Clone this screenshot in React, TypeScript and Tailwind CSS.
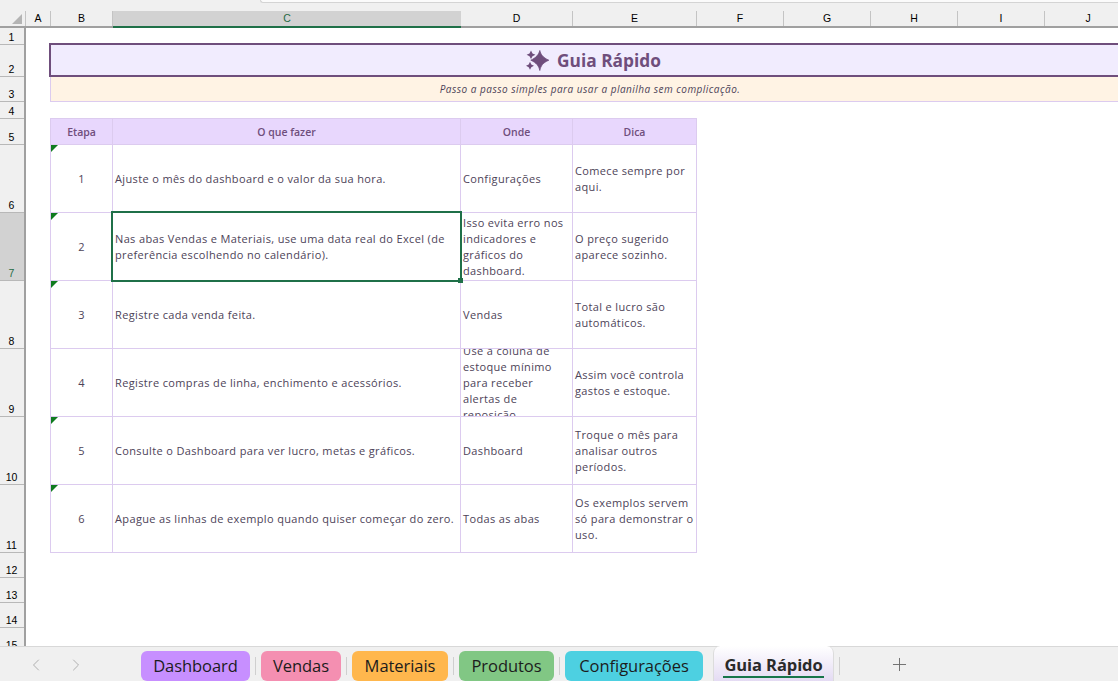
import { Plus, ChevronLeft, ChevronRight } from "lucide-react";

const font = { fontFamily: '"Open Sans", sans-serif' };

const columns: [string, string][] = [
  ["A", "w-[25px]"],
  ["B", "w-[62px]"],
  ["C", "w-[348px]"],
  ["D", "w-[112px]"],
  ["E", "w-[124px]"],
  ["F", "w-[87px]"],
  ["G", "w-[87px]"],
  ["H", "w-[87px]"],
  ["I", "w-[87px]"],
  ["J", "w-[87px]"],
];

const rowHeads: [string, string][] = [
  ["1", "h-[17px]"],
  ["2", "h-[32px]"],
  ["3", "h-[25px]"],
  ["4", "h-[17px]"],
  ["5", "h-[26px]"],
  ["6", "h-[68px]"],
  ["7", "h-[68px]"],
  ["8", "h-[68px]"],
  ["9", "h-[68px]"],
  ["10", "h-[68px]"],
  ["11", "h-[68px]"],
  ["12", "h-[25px]"],
  ["13", "h-[25px]"],
  ["14", "h-[25px]"],
  ["15", "h-[25px]"],
];

const rows = [
  ["1", "Ajuste o mês do dashboard e o valor da sua hora.", "Configurações", "Comece sempre por aqui."],
  ["2", "Nas abas Vendas e Materiais, use uma data real do Excel (de preferência escolhendo no calendário).", "Isso evita erro nos indicadores e gráficos do dashboard.", "O preço sugerido aparece sozinho."],
  ["3", "Registre cada venda feita.", "Vendas", "Total e lucro são automáticos."],
  ["4", "Registre compras de linha, enchimento e acessórios.", "Use a coluna de estoque mínimo para receber alertas de reposição.", "Assim você controla gastos e estoque."],
  ["5", "Consulte o Dashboard para ver lucro, metas e gráficos.", "Dashboard", "Troque o mês para analisar outros períodos."],
  ["6", "Apague as linhas de exemplo quando quiser começar do zero.", "Todas as abas", "Os exemplos servem só para demonstrar o uso."],
];

const tabs: [string, string, string][] = [
  ["Dashboard", "bg-[#c78fff]", "w-[109px]"],
  ["Vendas", "bg-[#f48fb1]", "w-[80px]"],
  ["Materiais", "bg-[#ffb74d]", "w-[96px]"],
  ["Produtos", "bg-[#81c784]", "w-[95px]"],
  ["Configurações", "bg-[#4dd0e1]", "w-[138px]"],
];

const cellText = "h-[68px] flex items-center overflow-hidden px-[2px] text-[11px] leading-4 tracking-[0.36px] text-[#4d4358] border-r border-b border-[#dccbef]";
const headCell = "h-[27px] flex items-center justify-center pt-[2px] text-[10.5px] font-semibold tracking-[0px] text-[#6f4e7c] bg-[#e8d7fd] border-r border-b border-t border-[#dccbef]";

function Sparkle() {
  return (
    <svg viewBox="0 0 23 21" className="w-[23px] h-[21px]" fill="#6f4e7c">
      <path d="M13.8 0.5 C14.8 4.5 16.8 7.5 22.8 10.2 C16.8 12.8 14.8 15.8 13.8 20.5 C12.8 15.8 10.4 12.8 4.8 10.2 C10.4 7.5 12.8 4.5 13.8 0.5 Z" stroke="#6f4e7c" strokeWidth="0.8" />
      <path d="M5 0.5 L6.5 3.4 L9.4 4.8 L6.5 6.2 L5 9.1 L3.5 6.2 L0.6 4.8 L3.5 3.4 Z" />
      <path d="M4 11.8 L5.3 14.4 L8 15.8 L5.3 17.2 L4 19.8 L2.7 17.2 L0 15.8 L2.7 14.4 Z" />
    </svg>
  );
}

export default function App() {
  return (
    <div style={font} className="relative w-[1118px] h-[681px] overflow-hidden bg-white flex flex-col">
      <div className="h-[11px] shrink-0 bg-[#f0f0f0] flex items-start">
        <div className="w-[260px] h-[3px] bg-[#f0f0f0]" />
        <div className="flex-1 h-[3px] bg-[#fbfbfb] border-b border-[#d4d4d4] border-l rounded-bl-[4px]" />
      </div>

      <div className="h-[17px] shrink-0 flex bg-[#f0f0f0] border-b-2 border-[#a0a0a0] text-[10.5px] text-black" style={{ fontFamily: '"Liberation Sans", sans-serif' }}>
        <div className="w-[26px] shrink-0 flex items-end justify-end pr-[3px] pb-[2px] border-r border-[#c4c4c4]">
          <div className="w-[10px] h-[10px] bg-[#b4b4b4] [clip-path:polygon(100%_0,100%_100%,0_100%)]" />
        </div>
        {columns.map(([name, w]) => {
          const selected = name === "C";
          return (
            <div
              key={name}
              className={`${w} shrink-0 flex items-center justify-center ${selected ? "bg-[#d2d2d2] text-[#1f6b45] -mb-[2px] border-b-2 border-b-[#1f7048]" : "border-r border-[#c4c4c4]"}`}
            >
              {name}
            </div>
          );
        })}
      </div>

      <div className="flex-1 flex min-h-0">
        <div className="w-[26px] shrink-0 bg-[#f0f0f0] border-r-2 border-[#a0a0a0] text-[10.5px] text-black overflow-hidden" style={{ fontFamily: '"Liberation Sans", sans-serif' }}>
          {rowHeads.map(([n, h]) => (
            <div
              key={n}
              className={`${h} flex items-end justify-center border-b leading-[14px] pr-[1px] ${n === "7" ? "bg-[#d2d2d2] text-[#1f6b45] border-[#b8b8b8] -mr-[2px] border-r-2 border-r-[#1f7048]" : "border-[#b8b8b8]"}`}
            >
              {n}
            </div>
          ))}
        </div>

        <div className="relative flex-1 min-w-0 overflow-hidden">
          <div className="flex flex-col pl-[24px] pt-[15px] w-[1200px]">
            <div className="h-[34px] -ml-px flex items-center bg-[#f1ecfe] border-2 border-r-0 border-[#6f4e7c]">
              <div className="w-[1085px] pt-[1px] flex items-center justify-center gap-[8px] text-[17.3px] font-bold text-[#6f4e7c] leading-none">
                <Sparkle />
                <span>Guia Rápido</span>
              </div>
            </div>
            <div className="h-[25px] flex items-center bg-[#fff3e4] border-b border-l border-[#dccbef]">
              <div className="w-[1078px] text-center italic text-[10px] tracking-[0.48px] text-[#4d4358]">
                Passo a passo simples para usar a planilha sem complicação.
              </div>
            </div>
            <div className="h-[16px]" />

            <div className="grid grid-cols-[62px_348px_112px_124px] w-[647px] border-l border-[#dccbef]">
              <div className={headCell}>Etapa</div>
              <div className={headCell}>O que fazer</div>
              <div className={headCell}>Onde</div>
              <div className={headCell}>Dica</div>
              {rows.map((row, i) => (
                <div key={row[0]} className="contents">
                  <div className={`${cellText} justify-center relative`}>
                    {i !== 3 && <span className="absolute left-0 top-0 w-[7px] h-[7px] bg-[#0f7b1f] [clip-path:polygon(0_0,100%_0,0_100%)]" />}
                    {row[0]}
                  </div>
                  <div className={cellText}>
                    <span>{row[1]}</span>
                  </div>
                  <div className={cellText}>
                    <span className="w-full shrink-0">{row[2]}</span>
                  </div>
                  <div className={cellText}>
                    <span>{row[3]}</span>
                  </div>
                </div>
              ))}
            </div>
          </div>

          <div className="absolute left-[85px] top-[183px] w-[351px] h-[71px] border-2 border-[#1f7048] pointer-events-none" />
          <div className="absolute left-[432px] top-[250px] w-[5px] h-[5px] bg-[#1f7048]" />
        </div>
      </div>

      <div className="h-[35px] shrink-0 bg-[#f0f0f0] border-t border-[#d8d8d8] relative flex items-end text-black">
        <div className="w-[141px] shrink-0 flex items-center pl-[26px] gap-[20px] self-stretch text-[#a8a8a8] pt-[2px]">
          <ChevronLeft size={20} strokeWidth={1.1} />
          <ChevronRight size={20} strokeWidth={1.1} />
        </div>
        {tabs.map(([name, bg, w], i) => (
          <div key={name} className="flex items-end">
            <div className={`${w} h-[30px] ${bg} rounded-[6px] flex items-center justify-center text-[16.5px] text-[#1c1c1c] tracking-[-0.05px]`}>
              {name}
            </div>
            {i < tabs.length - 1 && <div className="w-[11px] h-[30px] flex justify-center items-center"><div className="w-px h-[18px] bg-[#cfcfcf]" /></div>}
          </div>
        ))}
        <div className="ml-[10px] w-[121px] h-[35px] -mt-px bg-gradient-to-b from-white to-[#e4dbf3] rounded-t-[7px] border-x border-[#dcdcdc] flex flex-col items-center justify-end relative">
          <span className="text-[16.5px] font-bold text-[#2a2a2a] leading-[24px] tracking-[-0.08px] mb-[4px]">Guia Rápido</span>
          <div className="absolute left-[9px] right-[9px] bottom-[3px] h-[2px] bg-[#17754a]" />
        </div>
        <div className="w-[11px] h-[30px] flex justify-center items-center"><div className="w-px h-[18px] bg-[#cfcfcf]" /></div>
        <div className="ml-[44px] self-stretch flex items-center text-[#6e6e6e]">
          <Plus size={21} strokeWidth={1.1} />
        </div>
      </div>
    </div>
  );
}
